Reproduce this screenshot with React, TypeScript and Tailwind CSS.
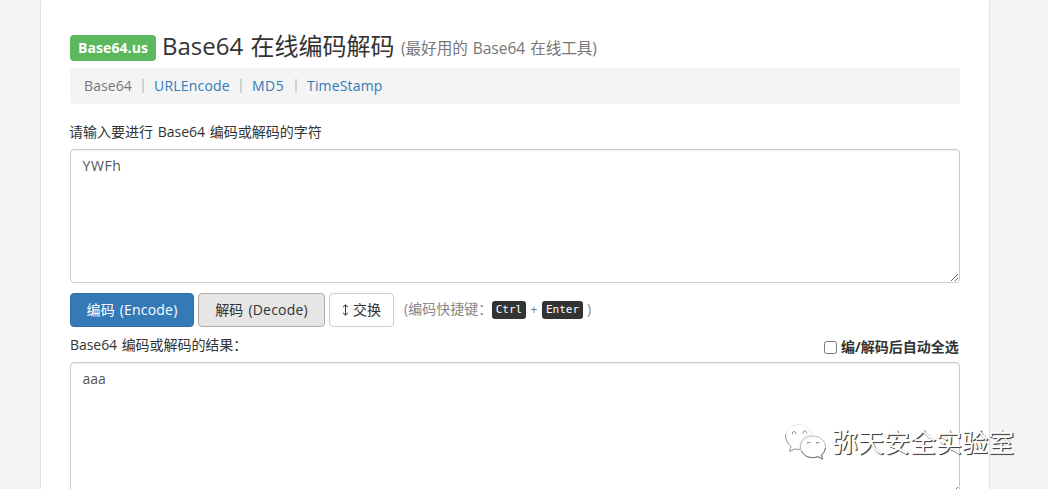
import React from "react";

const links = [
  { label: "URLEncode", cls: "w-[76px] tracking-[0.2px]" },
  { label: "MD5", cls: "w-[33px] tracking-[0.5px]" },
  { label: "TimeStamp", cls: "w-[77px] tracking-[0.17px]" },
];

function Watermark() {
  return (
    <div className="pointer-events-none absolute left-[784px] top-[421px] flex items-start">
      <svg width="44" height="40" viewBox="0 0 44 40" fill="none">
        <path
          d="M28 13C26 7.500 21 3.500 14 3.500C7 3.500 1.500 8.500 1.500 15C1.500 19 3.500 23 7 25.500L5.500 29.500L11 27.500Q13 28.500 16 28.500C15 19 20 14 28 13Z"
          fill="white"
          stroke="#d0d0d0"
          strokeWidth="0.5"
        />
        <path d="M1.500 13C1.500 19 3.500 22.500 7 25.500L5.500 30.500L10.500 28.200L16 28.500" stroke="#888" strokeWidth="0.8" />
        <path
          d="M29 15C21.500 15 16.500 20 16.500 26C16.500 32 21.500 36.500 29 36.500Q31.500 36.500 34 35.500L38.500 38L37.500 34C40.500 31.500 41.500 29.500 41.500 26C41.500 20 36 15 29 15Z"
          fill="white"
          stroke="#999"
          strokeWidth="0.7"
        />
        <path d="M17.500 30C19.500 34 23 36.700 28.500 36.700Q31.500 36.700 34 35.700L38.500 38.200L37.500 34Q41 31 41.500 27" stroke="#666" strokeWidth="0.9" />
        <path d="M8.800 13.200a1.700 1.700 0 1 1 2.800 0M19.500 12.500a1.700 1.700 0 1 1 2.800 0M23.500 22.700v-1.200h3M32.500 22.700v-1.200h3" stroke="#777" strokeWidth="0.8" />
      </svg>
      <span className="ml-[4px] mt-px whitespace-nowrap text-[26px] leading-[40px] text-white [text-shadow:1px_1px_0_#444,1px_1px_1px_#777]">
        弥天安全实验室
      </span>
    </div>
  );
}

const area =
  "block h-[134px] w-full resize rounded border border-[#ccc] bg-white px-[11.5px] py-1.5 text-[14px] leading-5 text-[#555] shadow-[inset_0_1px_1px_rgba(0,0,0,0.075)] outline-none";

export default function App() {
  return (
    <div className="relative h-[489px] w-[1048px] overflow-hidden bg-[#f4f4f4] font-['Open_Sans','Noto_Sans_CJK_SC',sans-serif] text-[14px] text-[#333]">
      <main className="ml-[41px] h-[489px] w-[948px] bg-white px-[29px] pt-[30px] shadow-[0_0_2px_rgba(0,0,0,0.25)]">
        <h1 className="flex h-[38px] items-start whitespace-nowrap">
          <span className="mt-[5px] flex h-[26px] w-[86px] items-center justify-center rounded bg-[#5cb85c] pb-[2px] text-[14px] font-bold tracking-[0.1px] text-white">
            Base64.us
          </span>
          <span className="ml-[6px] w-[233px] text-[24px] leading-[32px] [word-spacing:1px]">Base64 在线编码解码</span>
          <span className="ml-[6px] mt-[7px] text-[15.6px] leading-[22px] tracking-[-0.05px] [word-spacing:1px] text-[#777]">
            (最好用的 Base64 在线工具)
          </span>
        </h1>
        <nav className="flex h-[36px] items-center whitespace-nowrap rounded bg-[#f4f4f4] pb-px pl-[14px] text-[14px] text-[#777]">
          <span className="w-[48px] tracking-[0.1px]">Base64</span>
          {links.map((l) => (
            <React.Fragment key={l.label}>
              <span className="mx-[10px] mt-px h-[14px] w-[2px] bg-[#d3d0d2]" />
              <a className={`${l.cls} text-[#337ab7]`}>{l.label}</a>
            </React.Fragment>
          ))}
        </nav>
        <div className="-ml-px mt-[18px] h-[27px] whitespace-nowrap leading-5 [word-spacing:1px]">请输入要进行 Base64 编码或解码的字符</div>
        <textarea className={`${area} tracking-[0.6px]`} defaultValue="YWFh" spellCheck={false} />
        <div className="mt-[10px] flex h-[34px] items-center whitespace-nowrap">
          <button className="h-[34px] w-[124px] rounded border border-[#2e6da4] bg-[#337ab7] pb-[2px] tracking-[0.2px] [word-spacing:1px] text-white">
            编码 (Encode)
          </button>
          <button className="ml-1 h-[34px] w-[127px] rounded border border-[#adadad] bg-[#e6e6e6] pb-[2px] tracking-[0.2px] [word-spacing:1px]">
            解码 (Decode)
          </button>
          <button className="ml-1 flex h-[34px] w-[65px] items-center justify-center gap-[4px] rounded border border-[#ccc] bg-white pb-px">
            <svg className="mt-px" width="7" height="12" viewBox="0 0 7 12" fill="none" stroke="#333" strokeWidth="1">
              <path d="M3.500 1v10M1 3.200L3.500 .8L6 3.200M1 8.800L3.500 11.200L6 8.800" />
            </svg>
            交换
          </button>
          <span className="-mt-[4px] ml-[10px] w-[88px] text-[#888]">(编码快捷键：</span>
          <kbd className="flex h-[18px] w-[34px] items-center justify-center rounded-[3px] bg-[#333] pt-px font-['DejaVu_Sans_Mono',monospace] text-[11px] text-white">
            Ctrl
          </kbd>
          <span className="w-[16px] text-center text-[12px] text-[#777]">+</span>
          <kbd className="flex h-[18px] w-[41px] items-center justify-center rounded-[3px] bg-[#333] pt-px font-['DejaVu_Sans_Mono',monospace] text-[11px] text-white">
            Enter
          </kbd>
          <span className="-mt-[4px] ml-[4px] text-[#888]">)</span>
        </div>
        <div className="flex h-[35px] items-start justify-between whitespace-nowrap pt-[8px] leading-5">
          <span className="tracking-[-0.05px] [word-spacing:1px]">Base64 编码或解码的结果：</span>
          <label className="mt-[2px] flex items-center font-bold">
            <input type="checkbox" className="mr-1 h-[13px] w-[13px]" />
            <span className="w-[119px]">编/解码后自动全选</span>
          </label>
        </div>
        <textarea className={area} defaultValue="aaa" spellCheck={false} />
      </main>
      <Watermark />
    </div>
  );
}
